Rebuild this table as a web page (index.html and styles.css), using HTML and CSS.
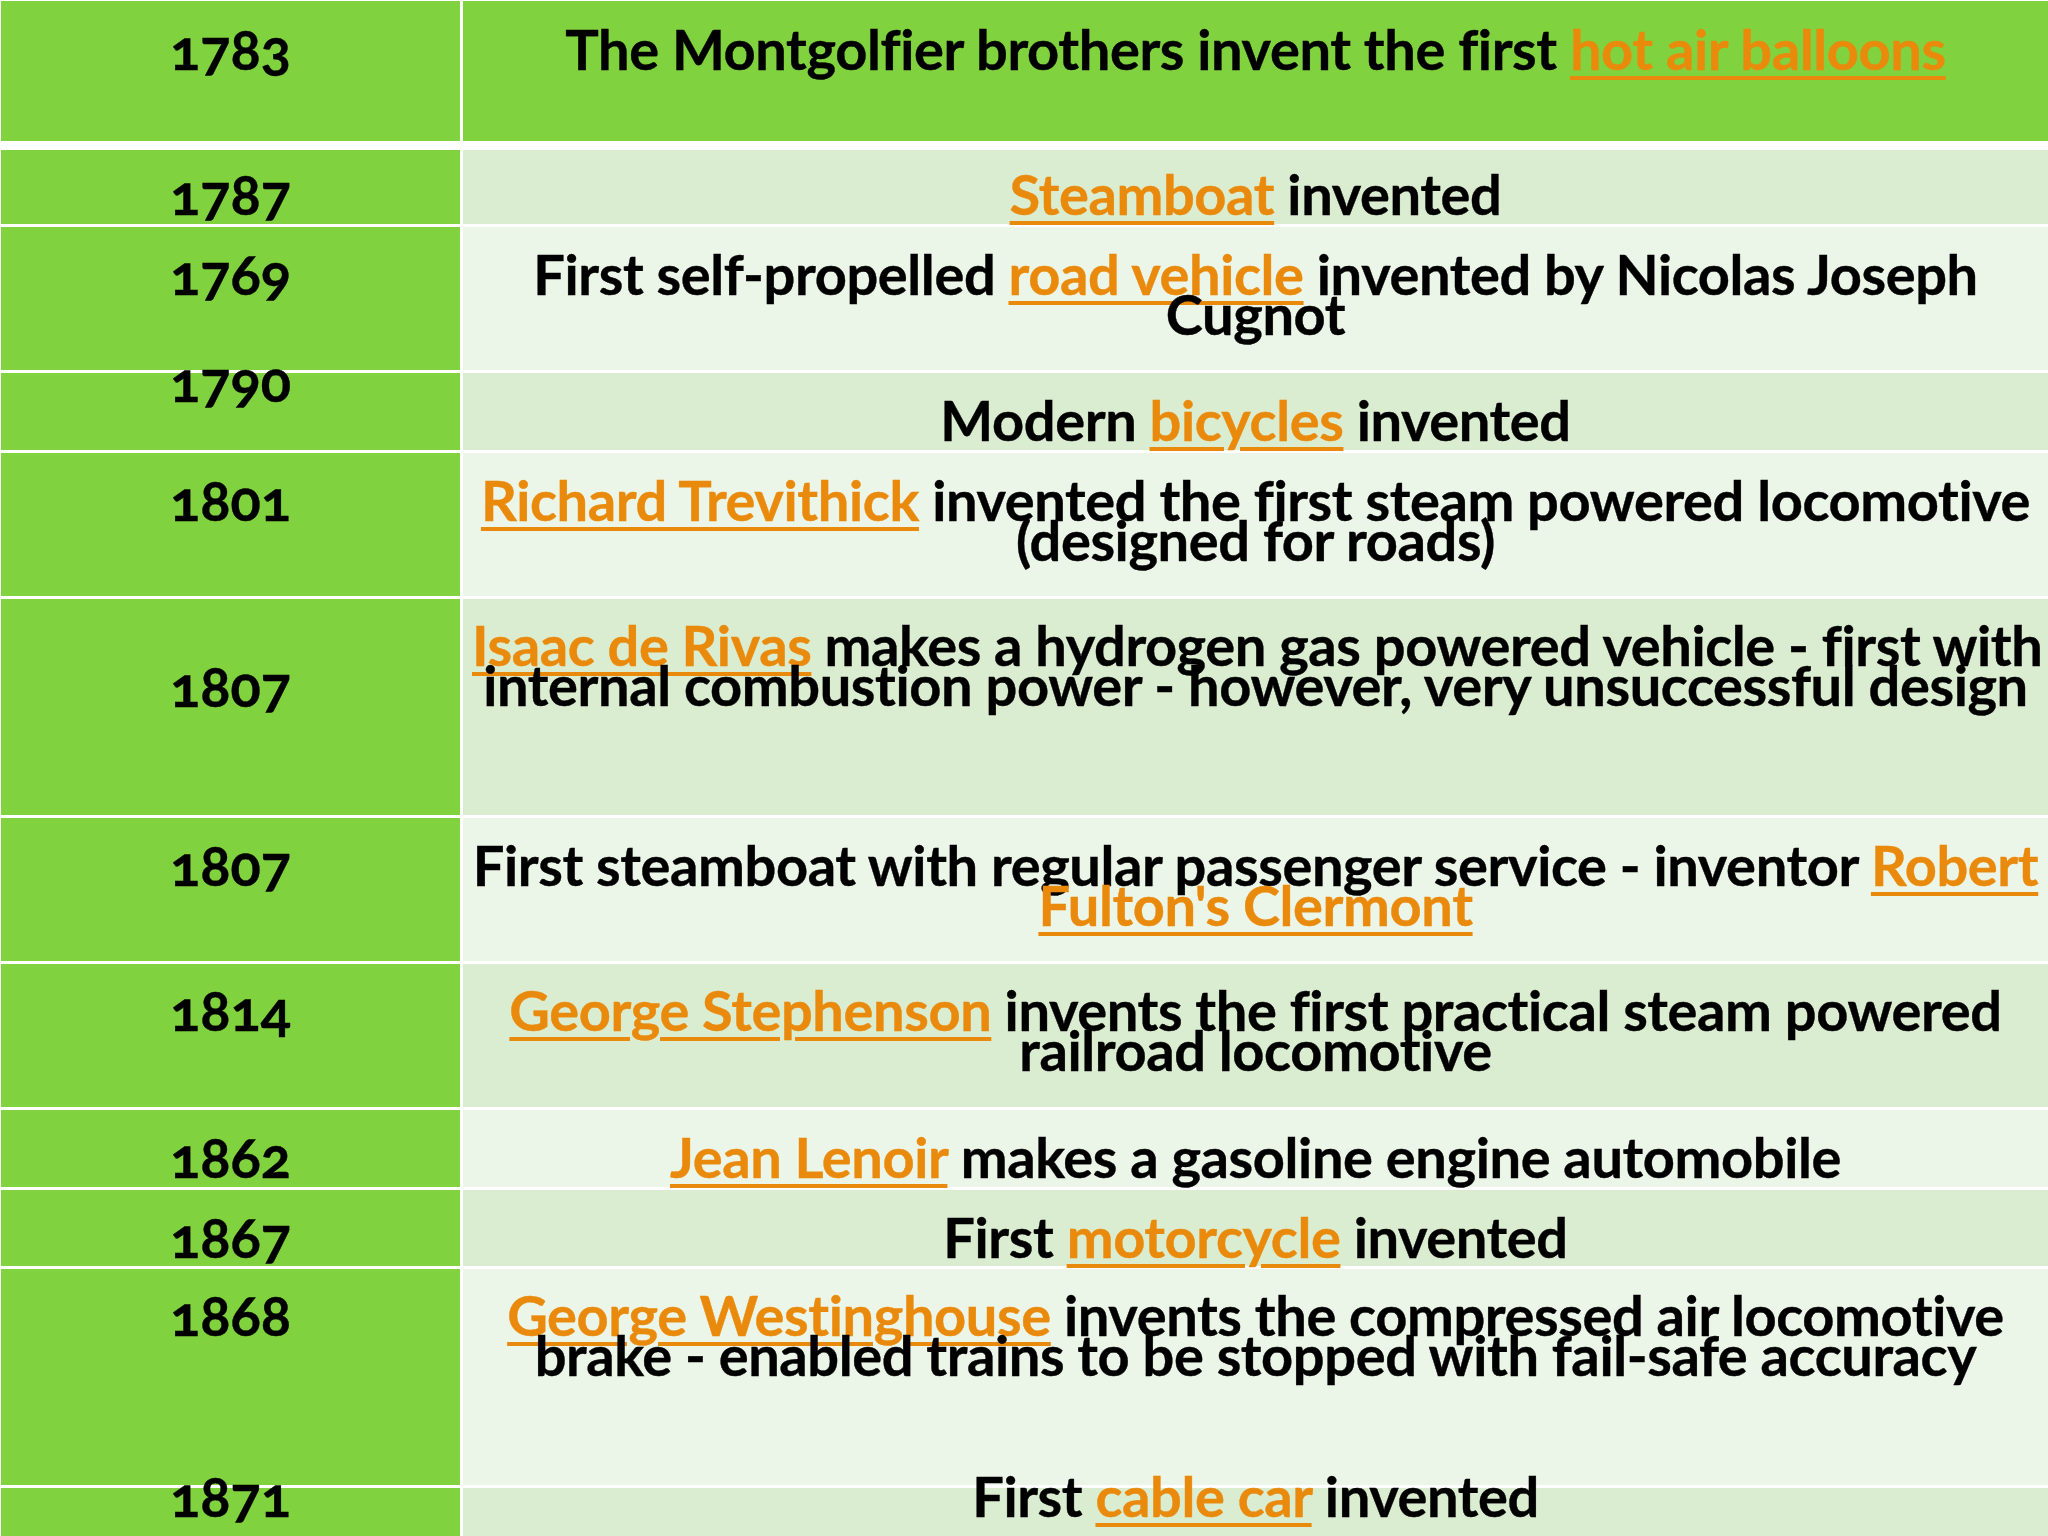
FILE: index.html
```html
<!DOCTYPE html>
<html lang="en">
<head>
<meta charset="utf-8">
<title>Transportation timeline</title>
<link rel="stylesheet" href="styles.css">
</head>
<body>
<div class="timeline">
  <div class="cell year head"><div class="txt m-70">1783</div></div>
  <div class="cell event head"><div class="txt m-70">The Montgolfier brothers invent the first <a href="#">hot air balloons</a></div></div>

  <div class="cell year"><div class="txt m-66">1787</div></div>
  <div class="cell event dark"><div class="txt m-66"><a href="#">Steamboat</a> invented</div></div>

  <div class="cell year"><div class="txt m-69">1769</div></div>
  <div class="cell event light"><div class="txt m-69">First self-propelled <a href="#">road vehicle</a> invented by Nicolas Joseph<br>Cugnot</div></div>

  <div class="cell year"><div class="txt m-30">1790</div></div>
  <div class="cell event dark"><div class="txt m-69">Modern <a href="#">bicycles</a> invented</div></div>

  <div class="cell year"><div class="txt m-69">1801</div></div>
  <div class="cell event light"><div class="txt m-69"><a href="#">Richard Trevithick</a> invented the first steam powered locomotive<br>(designed for roads)</div></div>

  <div class="cell year"><div class="txt m-109">1807</div></div>
  <div class="cell event dark"><div class="txt m-68"><a href="#">Isaac de Rivas</a> makes a hydrogen gas powered vehicle - first with<br>internal combustion power - however, very unsuccessful design</div></div>

  <div class="cell year"><div class="txt m-69">1807</div></div>
  <div class="cell event light"><div class="txt m-69">First steamboat with regular passenger service - inventor <a href="#">Robert<br>Fulton's Clermont</a></div></div>

  <div class="cell year"><div class="txt m-68">1814</div></div>
  <div class="cell event dark"><div class="txt m-68"><a href="#">George Stephenson</a> invents the first practical steam powered<br>railroad locomotive</div></div>

  <div class="cell year"><div class="txt m-69">1862</div></div>
  <div class="cell event light"><div class="txt m-69"><a href="#">Jean Lenoir</a> makes a gasoline engine automobile</div></div>

  <div class="cell year"><div class="txt m-69">1867</div></div>
  <div class="cell event dark"><div class="txt m-69">First <a href="#">motorcycle</a> invented</div></div>

  <div class="cell year"><div class="txt m-68">1868</div></div>
  <div class="cell event light"><div class="txt m-68"><a href="#">George Westinghouse</a> invents the compressed air locomotive<br>brake - enabled trains to be stopped with fail-safe accuracy</div></div>

  <div class="cell year"><div class="txt m-30">1871</div></div>
  <div class="cell event dark"><div class="txt m-30">First <a href="#">cable car</a> invented</div></div>
</div>
</body>
</html>
```

FILE: styles.css
```css
html, body {
  margin: 0;
  padding: 0;
  background: #ffffff;
}

body {
  width: 2048px;
  height: 1536px;
  overflow: hidden;
}

.timeline {
  display: grid;
  grid-template-columns: 459px 1fr;
  grid-template-rows: 146px 74px 143px 77px 143px 216px 143px 143px 77px 76px 216px 60px;
  column-gap: 3px;
  row-gap: 3px;
  padding: 1px 0 0 1px;
  background: #ffffff;
  font-family: Lato, "Open Sans", sans-serif;
  font-weight: 700;
  font-size: 56px;
  line-height: 40px;
  color: #000000;
  letter-spacing: -0.4px;
  -webkit-text-stroke: 0.4px currentColor;
}

.cell {
  overflow: visible;
  text-align: center;
  min-width: 0;
}

.head {
  margin-bottom: 6px;
}

.year {
  background: #80d23e;
  font-variant-numeric: oldstyle-nums;
  letter-spacing: 0;
}

.event {
  padding: 0 9px;
  white-space: nowrap;
}

.event.head {
  background: #80d23e;
}

.event.dark {
  background: #dbedd0;
}

.event.light {
  background: #ecf6e8;
}

.txt {
  position: relative;
}

.m-30 { margin-top: -12px; }
.m-66 { margin-top: 24px; }
.m-68 { margin-top: 26px; }
.m-69 { margin-top: 27px; }
.m-70 { margin-top: 28px; }
.m-109 { margin-top: 67px; }

a {
  color: #ea8a0c;
  text-decoration: underline;
  text-decoration-thickness: 4px;
  text-underline-offset: 6px;
}
```
